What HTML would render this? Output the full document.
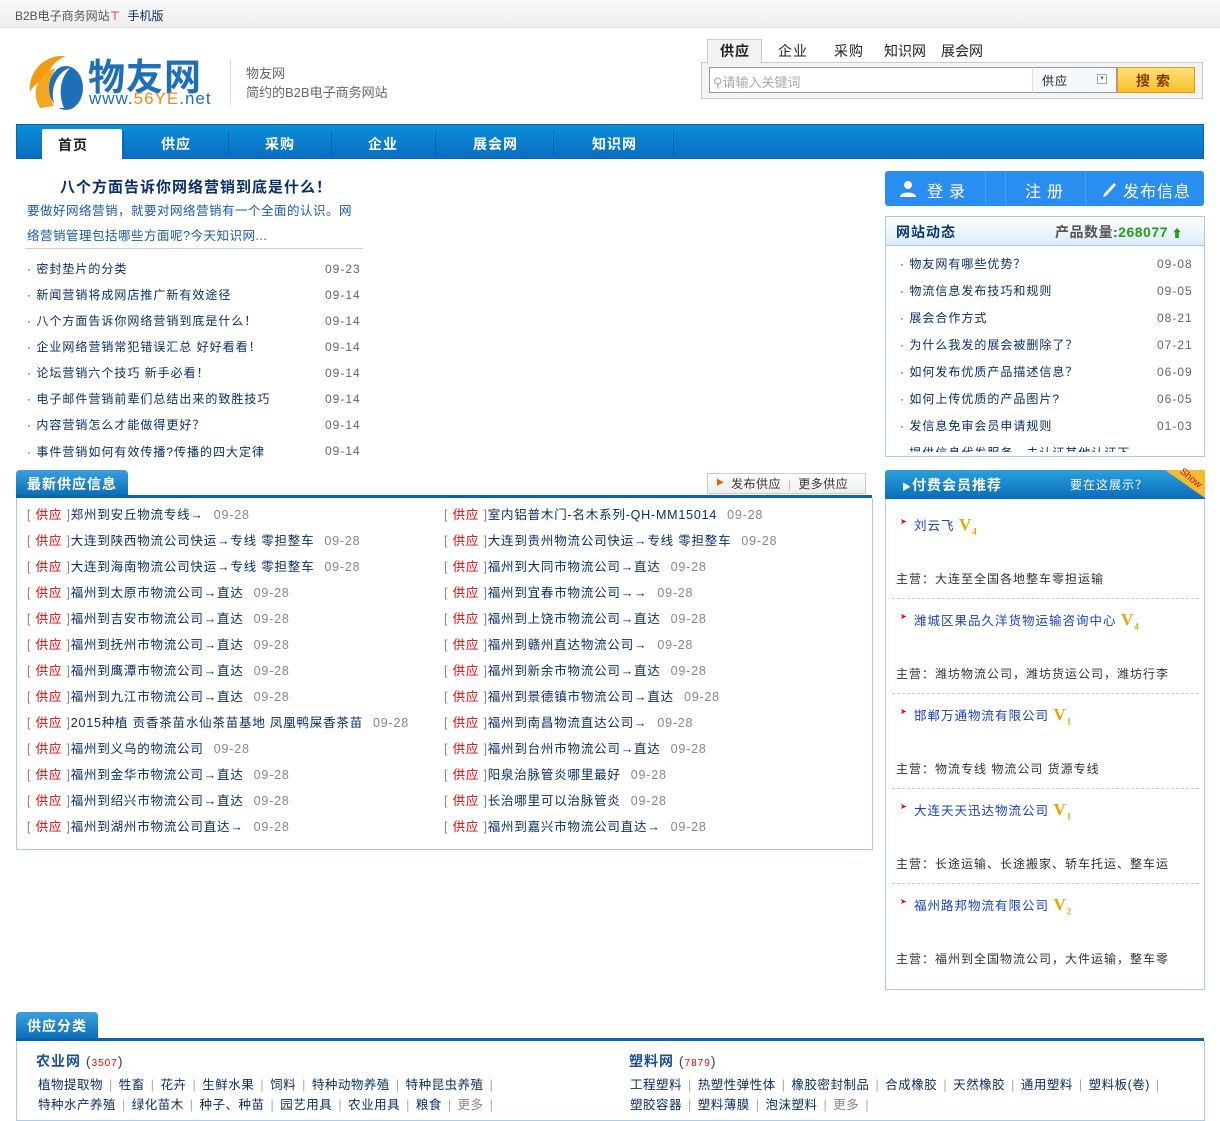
<!DOCTYPE html>
<html><head><meta charset="utf-8"><style>
*{margin:0;padding:0;box-sizing:border-box}
body{width:1220px;height:1109px;overflow:hidden;background:#fff;font-family:"Liberation Sans","Noto Sans CJK SC",sans-serif;font-size:12px;color:#333;position:relative;letter-spacing:1px}
.a{position:absolute;white-space:nowrap}
.top{position:absolute;left:0;top:0;width:1220px;height:28px;background:linear-gradient(#fafafa,#eee);border-bottom:1px solid #ddd}
.nav{position:absolute;left:16px;top:124px;width:1188px;height:35px;background:linear-gradient(#0a8fd9,#0a6ec2);border:1px solid #0a64b0}
.nav span{position:absolute;top:9px;color:#fff;font-weight:bold;font-size:14px}
.nav i{position:absolute;top:6px;width:1px;height:24px;background:#3fa3e0;border-right:1px solid #0a5ea8}
.li{position:absolute;font-size:12px;color:#0b2f66}
.dt{position:absolute;color:#666;font-size:12px}
.sp{position:absolute;font-size:12.5px;color:#0b2f66;white-space:nowrap;letter-spacing:0.8px}
.sp b{font-weight:normal;color:#888}.sp em{font-style:normal;color:#e00}.sp s{text-decoration:none;color:#888;margin-left:10px}
.tab{position:absolute;background:linear-gradient(#3aa0e0,#0a6db8);color:#fff;font-weight:bold;font-size:14px;border-radius:4px 4px 0 0;padding-left:11px;padding-top:4px}
.v{color:#f0a000;font-weight:bold;font-family:"Liberation Serif",serif;font-size:17px}
.v sub{font-size:9px}
.cat{position:absolute;font-size:12.5px;color:#0b2f66;white-space:nowrap;letter-spacing:0.5px}
.cat i{font-style:normal;color:#aaa;margin:0 6px}
</style></head><body>
<div class="top"></div>
<div class="a" style="left:15px;top:7px;color:#555;letter-spacing:0">B2B电子商务网站<span style="color:#e00">⊤</span> <span style="color:#0b2f66;margin-left:4px">手机版</span></div>

<!-- logo -->
<svg class="a" style="left:26px;top:52px" width="60" height="60" viewBox="0 0 60 60">
<path d="M4 40 C2 18 20 2 40 4 C30 8 22 16 20 30 C14 28 8 32 4 40Z" fill="#f49a12"/>
<path d="M14 56 C4 40 12 22 30 16 C22 26 22 42 28 54Z" fill="#f5a623"/>
<ellipse cx="40" cy="36" rx="17" ry="22" fill="#1f6fb8"/>
<path d="M30 56 C22 40 30 20 44 16 C34 26 32 42 38 56Z" fill="#fff"/>
</svg>
<div class="a" style="left:88px;top:47px;font-size:37px;font-weight:bold;color:#1f6fb8;letter-spacing:1px">物友网</div>
<div class="a" style="left:89px;top:89px;font-size:17px;color:#1f6fb8;letter-spacing:1px">www.<span style="color:#f08a20">56YE</span>.net</div>
<div class="a" style="left:230px;top:60px;width:1px;height:45px;background:#cfdfee"></div>
<div class="a" style="left:246px;top:63px;font-size:13px;color:#666;letter-spacing:0">物友网</div>
<div class="a" style="left:246px;top:82px;font-size:13px;color:#666;letter-spacing:0">简约的B2B电子商务网站</div>

<!-- search -->
<div class="a" style="left:707px;top:39px;width:55px;height:25px;background:#f2f2f2;border:1px solid #ccc;border-bottom:none;z-index:2"></div>
<div class="a" style="left:720px;top:41px;font-size:14px;font-weight:bold;color:#222;z-index:3">供应</div>
<div class="a" style="left:778px;top:41px;font-size:14px;color:#222">企业</div>
<div class="a" style="left:834px;top:41px;font-size:14px;color:#222">采购</div>
<div class="a" style="left:884px;top:41px;font-size:14px;color:#222;letter-spacing:0">知识网</div>
<div class="a" style="left:941px;top:41px;font-size:14px;color:#222;letter-spacing:0">展会网</div>
<div class="a" style="left:701px;top:62px;width:502px;height:37px;background:#f4f4f4;border:1px solid #ccc"></div>
<div class="a" style="left:709px;top:67px;width:324px;height:26px;background:#fff;border:1px solid #999;border-right:none"></div>
<div class="a" style="left:713px;top:72px;color:#aaa;font-size:13px;letter-spacing:0">⚲请输入关键词</div>
<div class="a" style="left:1032px;top:67px;width:85px;height:26px;background:#f3f9fd;border:1px solid #999;border-left:1px solid #ddd"></div>
<div class="a" style="left:1042px;top:72px;color:#222">供应</div>
<div class="a" style="left:1097px;top:74px;width:10px;height:10px;border:1px solid #aaa;background:#fff;font-size:7px;line-height:8px;text-align:center;color:#666;letter-spacing:0">▾</div>
<div class="a" style="left:1117px;top:67px;width:78px;height:26px;background:linear-gradient(#fde07a,#f8c02a);border:1px solid #e09a20"></div>
<div class="a" style="left:1136px;top:71px;font-size:14px;font-weight:bold;color:#8a3a00;letter-spacing:6px">搜索</div>

<!-- nav -->
<div class="nav">
<div class="a" style="left:25px;top:4px;width:80px;height:31px;background:#fff;border-radius:2px 2px 0 0"></div>
<span style="left:41px;top:10px;color:#222">首页</span>
<i style="left:106px"></i><span style="left:144px">供应</span>
<i style="left:211px"></i><span style="left:248px">采购</span>
<i style="left:314px"></i><span style="left:351px">企业</span>
<i style="left:418px"></i><span style="left:456px">展会网</span>
<i style="left:536px"></i><span style="left:575px">知识网</span>
<i style="left:656px"></i>
</div>

<!-- left article -->
<div class="a" style="left:60px;top:176px;font-size:15px;font-weight:bold;color:#0b2f66">八个方面告诉你网络营销到底是什么！</div>
<div class="a" style="left:27px;top:200px;font-size:12.5px;color:#1a5aa8;letter-spacing:0.5px">要做好网络营销，就要对网络营销有一个全面的认识。网</div>
<div class="a" style="left:27px;top:225px;font-size:12.5px;color:#1a5aa8;letter-spacing:0.5px">络营销管理包括哪些方面呢?今天知识网...</div>
<div class="a" style="left:25px;top:248px;width:338px;height:1px;background:#ccc"></div>
<div class="li" style="left:27px;top:260px">· 密封垫片的分类</div><div class="dt" style="left:325px;top:262px">09-23</div>
<div class="li" style="left:27px;top:286px">· 新闻营销将成网店推广新有效途径</div><div class="dt" style="left:325px;top:288px">09-14</div>
<div class="li" style="left:27px;top:312px">· 八个方面告诉你网络营销到底是什么！</div><div class="dt" style="left:325px;top:314px">09-14</div>
<div class="li" style="left:27px;top:338px">· 企业网络营销常犯错误汇总 好好看看！</div><div class="dt" style="left:325px;top:340px">09-14</div>
<div class="li" style="left:27px;top:364px">· 论坛营销六个技巧 新手必看！</div><div class="dt" style="left:325px;top:366px">09-14</div>
<div class="li" style="left:27px;top:390px">· 电子邮件营销前辈们总结出来的致胜技巧</div><div class="dt" style="left:325px;top:392px">09-14</div>
<div class="li" style="left:27px;top:416px">· 内容营销怎么才能做得更好？</div><div class="dt" style="left:325px;top:418px">09-14</div>
<div class="li" style="left:27px;top:443px">· 事件营销如何有效传播?传播的四大定律</div><div class="dt" style="left:325px;top:444px">09-14</div>

<!-- right login -->
<div class="a" style="left:885px;top:171px;width:319px;height:35px;background:#2a8ef0;border-radius:3px"></div>
<div class="a" style="left:985px;top:171px;width:1px;height:35px;background:#4aa2f4"></div>
<div class="a" style="left:1005px;top:171px;width:1px;height:35px;background:#4aa2f4"></div>
<div class="a" style="left:1085px;top:171px;width:1px;height:35px;background:#4aa2f4"></div>
<svg class="a" style="left:899px;top:180px" width="18" height="18" viewBox="0 0 18 18"><circle cx="9" cy="5" r="4" fill="#fff"/><path d="M1 17 C1 11 17 11 17 17Z" fill="#fff"/></svg>
<div class="a" style="left:927px;top:178px;font-size:16px;color:#fff;letter-spacing:6px">登录</div>
<div class="a" style="left:1025px;top:178px;font-size:16px;color:#fff;letter-spacing:6px">注册</div>
<svg class="a" style="left:1100px;top:180px" width="18" height="18" viewBox="0 0 18 18"><path d="M4 14 L14 3 L16 5 L6 16 L3 17Z" fill="#fff"/></svg>
<div class="a" style="left:1123px;top:178px;font-size:16px;color:#fff">发布信息</div>

<div class="a" style="left:885px;top:216px;width:320px;height:241px;border:1px solid #a9cbee"></div>
<div class="a" style="left:886px;top:217px;width:318px;height:29px;background:linear-gradient(#fff,#dcebf9);border-bottom:1px solid #a9cbee"></div>
<div class="a" style="left:896px;top:222px;font-size:14px;font-weight:bold;color:#0b3a6e">网站动态</div>
<div class="a" style="left:1055px;top:222px;font-size:14px;font-weight:bold;color:#555;letter-spacing:0.5px">产品数量:<span style="color:#2a9a1a">268077</span><span style="color:#2a9a1a;font-size:11px"> ⬆</span></div>
<div class="li" style="left:900px;top:255px">· 物友网有哪些优势？</div><div class="dt" style="left:1157px;top:257px">09-08</div>
<div class="li" style="left:900px;top:282px">· 物流信息发布技巧和规则</div><div class="dt" style="left:1157px;top:284px">09-05</div>
<div class="li" style="left:900px;top:309px">· 展会合作方式</div><div class="dt" style="left:1157px;top:311px">08-21</div>
<div class="li" style="left:900px;top:336px">· 为什么我发的展会被删除了？</div><div class="dt" style="left:1157px;top:338px">07-21</div>
<div class="li" style="left:900px;top:363px">· 如何发布优质产品描述信息？</div><div class="dt" style="left:1157px;top:365px">06-09</div>
<div class="li" style="left:900px;top:390px">· 如何上传优质的产品图片?</div><div class="dt" style="left:1157px;top:392px">06-05</div>
<div class="li" style="left:900px;top:417px">· 发信息免审会员申请规则</div><div class="dt" style="left:1157px;top:419px">01-03</div>
<div class="a" style="left:900px;top:444px;height:8px;overflow:hidden;color:#0b2f66">· 提供信息代发服务，未认证其他认证下</div>

<!-- supply -->
<div class="tab" style="left:16px;top:470px;width:112px;height:26px">最新供应信息</div>
<div class="a" style="left:16px;top:495px;width:856px;height:3px;background:#0a64a8"></div>
<div class="a" style="left:16px;top:498px;width:857px;height:352px;border:1px solid #a9cbee;border-top:none"></div>
<div class="a" style="left:707px;top:473px;width:159px;height:21px;background:linear-gradient(#fff,#eee);border:1px solid #ccc"></div>
<div class="a" style="left:716px;top:477px;color:#f06000;font-size:8px">▶</div>
<div class="a" style="left:731px;top:475px;color:#333;letter-spacing:0.5px">发布供应 <span style="color:#bbb;margin:0 3px">|</span> 更多供应</div>

<div class="sp" style="left:27px;top:504px"><b>[</b> <em>供应</em> <b>]</b>郑州到安丘物流专线→<s>09-28</s></div>
<div class="sp" style="left:27px;top:530px"><b>[</b> <em>供应</em> <b>]</b>大连到陕西物流公司快运→专线 零担整车<s>09-28</s></div>
<div class="sp" style="left:27px;top:556px"><b>[</b> <em>供应</em> <b>]</b>大连到海南物流公司快运→专线 零担整车<s>09-28</s></div>
<div class="sp" style="left:27px;top:582px"><b>[</b> <em>供应</em> <b>]</b>福州到太原市物流公司→直达<s>09-28</s></div>
<div class="sp" style="left:27px;top:608px"><b>[</b> <em>供应</em> <b>]</b>福州到吉安市物流公司→直达<s>09-28</s></div>
<div class="sp" style="left:27px;top:634px"><b>[</b> <em>供应</em> <b>]</b>福州到抚州市物流公司→直达<s>09-28</s></div>
<div class="sp" style="left:27px;top:660px"><b>[</b> <em>供应</em> <b>]</b>福州到鹰潭市物流公司→直达<s>09-28</s></div>
<div class="sp" style="left:27px;top:686px"><b>[</b> <em>供应</em> <b>]</b>福州到九江市物流公司→直达<s>09-28</s></div>
<div class="sp" style="left:27px;top:712px"><b>[</b> <em>供应</em> <b>]</b>2015种植 贡香茶苗水仙茶苗基地 凤凰鸭屎香茶苗<s>09-28</s></div>
<div class="sp" style="left:27px;top:738px"><b>[</b> <em>供应</em> <b>]</b>福州到义乌的物流公司<s>09-28</s></div>
<div class="sp" style="left:27px;top:764px"><b>[</b> <em>供应</em> <b>]</b>福州到金华市物流公司→直达<s>09-28</s></div>
<div class="sp" style="left:27px;top:790px"><b>[</b> <em>供应</em> <b>]</b>福州到绍兴市物流公司→直达<s>09-28</s></div>
<div class="sp" style="left:27px;top:816px"><b>[</b> <em>供应</em> <b>]</b>福州到湖州市物流公司直达→<s>09-28</s></div>

<div class="sp" style="left:444px;top:504px"><b>[</b> <em>供应</em> <b>]</b>室内铝普木门-名木系列-QH-MM15014<s>09-28</s></div>
<div class="sp" style="left:444px;top:530px"><b>[</b> <em>供应</em> <b>]</b>大连到贵州物流公司快运→专线 零担整车<s>09-28</s></div>
<div class="sp" style="left:444px;top:556px"><b>[</b> <em>供应</em> <b>]</b>福州到大同市物流公司→直达<s>09-28</s></div>
<div class="sp" style="left:444px;top:582px"><b>[</b> <em>供应</em> <b>]</b>福州到宜春市物流公司→→<s>09-28</s></div>
<div class="sp" style="left:444px;top:608px"><b>[</b> <em>供应</em> <b>]</b>福州到上饶市物流公司→直达<s>09-28</s></div>
<div class="sp" style="left:444px;top:634px"><b>[</b> <em>供应</em> <b>]</b>福州到赣州直达物流公司→<s>09-28</s></div>
<div class="sp" style="left:444px;top:660px"><b>[</b> <em>供应</em> <b>]</b>福州到新余市物流公司→直达<s>09-28</s></div>
<div class="sp" style="left:444px;top:686px"><b>[</b> <em>供应</em> <b>]</b>福州到景德镇市物流公司→直达<s>09-28</s></div>
<div class="sp" style="left:444px;top:712px"><b>[</b> <em>供应</em> <b>]</b>福州到南昌物流直达公司→<s>09-28</s></div>
<div class="sp" style="left:444px;top:738px"><b>[</b> <em>供应</em> <b>]</b>福州到台州市物流公司→直达<s>09-28</s></div>
<div class="sp" style="left:444px;top:764px"><b>[</b> <em>供应</em> <b>]</b>阳泉治脉管炎哪里最好<s>09-28</s></div>
<div class="sp" style="left:444px;top:790px"><b>[</b> <em>供应</em> <b>]</b>长治哪里可以治脉管炎<s>09-28</s></div>
<div class="sp" style="left:444px;top:816px"><b>[</b> <em>供应</em> <b>]</b>福州到嘉兴市物流公司直达→<s>09-28</s></div>

<!-- paid members -->
<div class="a" style="left:885px;top:470px;width:320px;height:520px;border:1px solid #a9cbee;border-radius:3px 3px 0 0"></div>
<div class="a" style="left:885px;top:470px;width:320px;height:29px;background:linear-gradient(#2aa0dc,#0a6cb8);border-radius:3px 3px 0 0"></div>
<div class="a" style="left:1165px;top:470px;width:0;height:0;border-left:40px solid transparent;border-top:28px solid #f8b830"></div>
<div class="a" style="left:1178px;top:473px;font-size:10px;color:#b02000;transform:rotate(40deg);letter-spacing:0">Show</div>
<div class="a" style="left:902px;top:475px;font-size:14px;font-weight:bold;color:#fff"><span style="font-size:9px">▶</span>付费会员推荐</div>
<div class="a" style="left:1070px;top:476px;font-size:12px;color:#fff">要在这展示？</div>

<div class="a" style="left:900px;top:517px;font-size:8px;color:#e00">➤</div><div class="a" style="left:914px;top:515px;font-size:12.5px;color:#1a40c0">刘云飞 <span class="v">V<sub>4</sub></span></div>
<div class="a" style="left:896px;top:570px;color:#333">主营：大连至全国各地整车零担运输</div>
<div class="a" style="left:892px;top:598px;width:307px;border-top:1px dashed #ccc"></div>
<div class="a" style="left:900px;top:612px;font-size:8px;color:#e00">➤</div><div class="a" style="left:914px;top:610px;font-size:12.5px;color:#1a40c0">潍城区果品久洋货物运输咨询中心 <span class="v">V<sub>4</sub></span></div>
<div class="a" style="left:896px;top:665px;color:#333">主营：潍坊物流公司，潍坊货运公司，潍坊行李</div>
<div class="a" style="left:892px;top:693px;width:307px;border-top:1px dashed #ccc"></div>
<div class="a" style="left:900px;top:707px;font-size:8px;color:#e00">➤</div><div class="a" style="left:914px;top:705px;font-size:12.5px;color:#1a40c0">邯郸万通物流有限公司 <span class="v">V<sub>1</sub></span></div>
<div class="a" style="left:896px;top:760px;color:#333">主营：物流专线 物流公司 货源专线</div>
<div class="a" style="left:892px;top:788px;width:307px;border-top:1px dashed #ccc"></div>
<div class="a" style="left:900px;top:802px;font-size:8px;color:#e00">➤</div><div class="a" style="left:914px;top:800px;font-size:12.5px;color:#1a40c0">大连天天迅达物流公司 <span class="v">V<sub>1</sub></span></div>
<div class="a" style="left:896px;top:855px;color:#333">主营：长途运输、长途搬家、轿车托运、整车运</div>
<div class="a" style="left:892px;top:883px;width:307px;border-top:1px dashed #ccc"></div>
<div class="a" style="left:900px;top:897px;font-size:8px;color:#e00">➤</div><div class="a" style="left:914px;top:895px;font-size:12.5px;color:#1a40c0">福州路邦物流有限公司 <span class="v">V<sub>2</sub></span></div>
<div class="a" style="left:896px;top:950px;color:#333">主营：福州到全国物流公司，大件运输，整车零</div>

<!-- categories -->
<div class="tab" style="left:16px;top:1012px;width:82px;height:27px">供应分类</div>
<div class="a" style="left:16px;top:1038px;width:1188px;height:3px;background:#0a64a8"></div>
<div class="a" style="left:16px;top:1041px;width:1189px;height:80px;border:1px solid #a9cbee;border-top:none"></div>
<div class="a" style="left:36px;top:1051px;font-size:14px;font-weight:bold;color:#1a4fa0">农业网 <span style="font-weight:normal;color:#444">(<span style="color:#e00;font-size:10px">3507</span>)</span></div>
<div class="cat" style="left:38px;top:1074px">植物提取物<i>|</i>牲畜<i>|</i>花卉<i>|</i>生鲜水果<i>|</i>饲料<i>|</i>特种动物养殖<i>|</i>特种昆虫养殖<i>|</i></div>
<div class="cat" style="left:38px;top:1094px">特种水产养殖<i>|</i>绿化苗木<i>|</i>种子、种苗<i>|</i>园艺用具<i>|</i>农业用具<i>|</i>粮食<i>|</i><span style="color:#888">更多</span><i>|</i></div>
<div class="a" style="left:629px;top:1051px;font-size:14px;font-weight:bold;color:#1a4fa0">塑料网 <span style="font-weight:normal;color:#444">(<span style="color:#e00;font-size:10px">7879</span>)</span></div>
<div class="cat" style="left:630px;top:1074px">工程塑料<i>|</i>热塑性弹性体<i>|</i>橡胶密封制品<i>|</i>合成橡胶<i>|</i>天然橡胶<i>|</i>通用塑料<i>|</i>塑料板(卷)<i>|</i></div>
<div class="cat" style="left:630px;top:1094px">塑胶容器<i>|</i>塑料薄膜<i>|</i>泡沫塑料<i>|</i><span style="color:#888">更多</span><i>|</i></div>
</body></html>
